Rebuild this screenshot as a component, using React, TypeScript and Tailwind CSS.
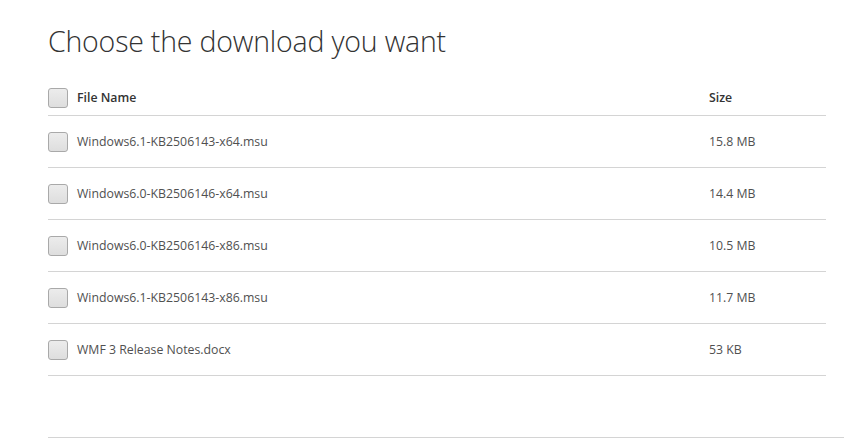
import React from "react";

const files = [
  { name: "Windows6.1-KB2506143-x64.msu", size: "15.8 MB" },
  { name: "Windows6.0-KB2506146-x64.msu", size: "14.4 MB" },
  { name: "Windows6.0-KB2506146-x86.msu", size: "10.5 MB" },
  { name: "Windows6.1-KB2506143-x86.msu", size: "11.7 MB" },
  { name: "WMF 3 Release Notes.docx", size: "53 KB" },
];

function Box() {
  return (
    <span className="block w-[20px] h-[20px] rounded-[3px] border border-[#a9a9a9] bg-gradient-to-b from-[#ececec] to-[#dedede] shrink-0" />
  );
}

export default function App() {
  return (
    <div
      className="w-[844px] h-[439px] bg-white overflow-hidden text-[#505050]"
      style={{ fontFamily: '"Open Sans", "Noto Sans", Arial, sans-serif' }}
    >
      <div className="pl-[48px]">
        <h1 className="pt-[21px] h-[80px] text-[28.5px] leading-[40px] font-light text-[#333] tracking-[-0.2px]">
          Choose the download you want
        </h1>
        <div className="mr-[18px]">
          <div className="h-[36px] flex items-center border-b border-[#d4d4d4] text-[12.3px] font-semibold text-[#333]">
            <div className="w-[661px] flex items-center gap-[9px]">
              <Box />
              <span className="pt-[2px]">File Name</span>
            </div>
            <span className="pt-[2px]">Size</span>
          </div>
          {files.map((f) => (
            <div
              key={f.name}
              className="h-[52px] flex items-center border-b border-[#d4d4d4] text-[12.3px]"
            >
              <div className="w-[661px] flex items-center gap-[9px]">
                <Box />
                <span className="pt-[2px]">{f.name}</span>
              </div>
              <span className="pt-[2px]">{f.size}</span>
            </div>
          ))}
        </div>
        <div className="mt-[61px] border-b border-[#d4d4d4]" />
      </div>
    </div>
  );
}
